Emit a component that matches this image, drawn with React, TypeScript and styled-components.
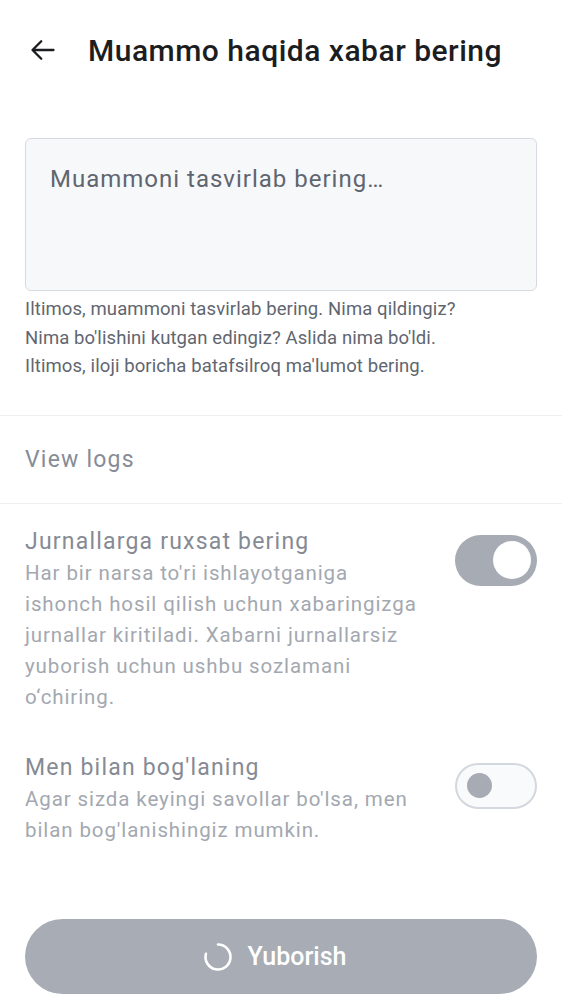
import styled, { createGlobalStyle } from "styled-components"

const GlobalStyle = createGlobalStyle`
  body {
    margin: 0;
    background: #ffffff;
    font-family: Roboto, "Noto Sans", sans-serif;
  }
`

const Page = styled.div`
  width: 562px;
  min-height: 1000px;
  display: flex;
  flex-direction: column;
  background: #fff;
`

const Header = styled.header`
  display: flex;
  align-items: center;
  height: 100px;
  padding: 0 29px;
  gap: 31px;
`

const BackButton = styled.button`
  display: flex;
  align-items: center;
  justify-content: center;
  padding: 0;
  border: none;
  background: none;
  color: #1c1d21;
`

const Title = styled.h1`
  margin: 0;
  font-size: 30px;
  font-weight: 500;
  letter-spacing: 0.5px;
  color: #1c1d21;
`

const Section = styled.section`
  padding: 38px 25px 0;
`

const TextArea = styled.textarea`
  display: block;
  width: 100%;
  height: 153px;
  box-sizing: border-box;
  padding: 26px 24px;
  border: 1.5px solid #d6dae0;
  border-radius: 6px;
  background: #f7f8fa;
  font-family: Roboto, sans-serif;
  font-size: 24px;
  letter-spacing: 1px;
  color: #1c1d21;
  resize: none;
  outline: none;

  &::placeholder {
    color: #5f6670;
  }
`

const HelpText = styled.p`
  margin: 4px 0 0;
  font-size: 18.5px;
  line-height: 28.5px;
  letter-spacing: 0.1px;
  color: #5f6670;
`

const LinkRow = styled.div`
  margin-top: 34px;
  display: flex;
  align-items: center;
  height: 87px;
  padding: 0 25px;
  border-top: 1px solid #eceef1;
  border-bottom: 1px solid #eceef1;
  font-size: 23px;
  letter-spacing: 1.2px;
  color: #868c96;
`

const Options = styled.div`
  display: flex;
  flex-direction: column;
  gap: 39px;
  padding: 22px 25px 0;
`

const OptionRow = styled.div`
  display: flex;
  align-items: flex-start;
  justify-content: space-between;
`

const OptionText = styled.div`
  width: 400px;
`

const OptionTitle = styled.div`
  font-size: 23px;
  line-height: 32px;
  letter-spacing: 1.2px;
  color: #858a94;
`

const OptionDesc = styled.div`
  font-size: 20.5px;
  line-height: 31px;
  letter-spacing: 0.9px;
  color: #a3a8b0;
`

const Toggle = styled.div<{ $on: boolean }>`
  flex: none;
  margin-top: ${(p) => (p.$on ? "9px" : "11px")};
  width: 82px;
  height: ${(p) => (p.$on ? "51px" : "46px")};
  box-sizing: border-box;
  border-radius: 26px;
  display: flex;
  align-items: center;
  justify-content: ${(p) => (p.$on ? "flex-end" : "flex-start")};
  padding: ${(p) => (p.$on ? "0 6px" : "0 10px")};
  background: ${(p) => (p.$on ? "#a6abb4" : "#f9fafb")};
  border: ${(p) => (p.$on ? "none" : "2.5px solid #d3d8de")};
`

const Knob = styled.span<{ $on: boolean }>`
  display: block;
  width: ${(p) => (p.$on ? "38px" : "25px")};
  height: ${(p) => (p.$on ? "38px" : "25px")};
  border-radius: 50%;
  background: ${(p) => (p.$on ? "#ffffff" : "#a6abb4")};
`

const Footer = styled.div`
  margin-top: auto;
  padding: 0 25px 6px;
`

const SubmitButton = styled.button`
  width: 100%;
  height: 75px;
  border: none;
  border-radius: 38px;
  background: #a7acb5;
  display: flex;
  align-items: center;
  justify-content: center;
  gap: 14px;
  padding: 0 14px 0 0;
  font-family: Roboto, sans-serif;
  font-size: 25px;
  font-weight: 500;
  color: #ffffff;
`

function ArrowBack() {
  return (
    <svg width="28" height="28" viewBox="0 0 24 24" fill="none">
      <path
        d="M21 12H3.5M10.5 4.5L3 12l7.5 7.5"
        stroke="currentColor"
        strokeWidth="2"
        strokeLinecap="round"
        strokeLinejoin="round"
      />
    </svg>
  )
}

function Spinner() {
  return (
    <svg width="32" height="32" viewBox="0 0 32 32" fill="none">
      <path
        d="M16 3.5A12.5 12.5 0 1 1 3.93 12.76"
        stroke="#ffffff"
        strokeWidth="2.6"
        strokeLinecap="round"
      />
    </svg>
  )
}

const options = [
  {
    title: "Jurnallarga ruxsat bering",
    desc: "Har bir narsa to'ri ishlayotganiga ishonch hosil qilish uchun xabaringizga jurnallar kiritiladi. Xabarni jurnallarsiz yuborish uchun ushbu sozlamani o‘chiring.",
    on: true
  },
  {
    title: "Men bilan bog'laning",
    desc: "Agar sizda keyingi savollar bo'lsa, men bilan bog'lanishingiz mumkin.",
    on: false
  }
]

export default function App() {
  return (
    <>
      <GlobalStyle />
      <Page>
        <Header>
          <BackButton aria-label="Back">
            <ArrowBack />
          </BackButton>
          <Title>Muammo haqida xabar bering</Title>
        </Header>
        <Section>
          <TextArea placeholder="Muammoni tasvirlab bering…" />
          <HelpText>
            Iltimos, muammoni tasvirlab bering. Nima qildingiz?
            <br />
            Nima bo'lishini kutgan edingiz? Aslida nima bo'ldi.
            <br />
            Iltimos, iloji boricha batafsilroq ma'lumot bering.
          </HelpText>
        </Section>
        <LinkRow>View logs</LinkRow>
        <Options>
          {options.map((o) => (
            <OptionRow key={o.title}>
              <OptionText>
                <OptionTitle>{o.title}</OptionTitle>
                <OptionDesc>{o.desc}</OptionDesc>
              </OptionText>
              <Toggle $on={o.on}>
                <Knob $on={o.on} />
              </Toggle>
            </OptionRow>
          ))}
        </Options>
        <Footer>
          <SubmitButton>
            <Spinner />
            Yuborish
          </SubmitButton>
        </Footer>
      </Page>
    </>
  )
}
